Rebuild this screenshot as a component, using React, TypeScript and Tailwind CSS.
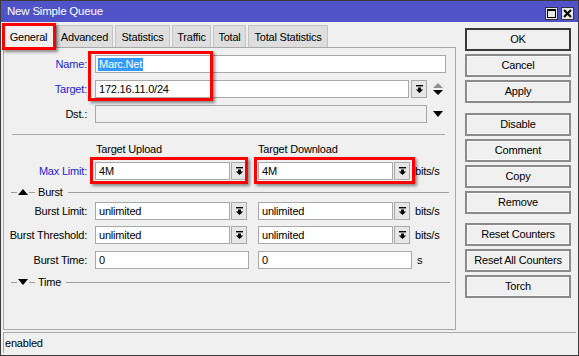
import React from "react";

const DropIcon = () => (
  <svg width="9" height="10" viewBox="0 0 9 10">
    <rect x="1" y="1" width="7" height="1.4" fill="#000" />
    <path d="M3 3.5h3v2h2.2L4.5 9 0.8 5.5H3z" fill="#000" />
  </svg>
);

const Input = ({ w, children, disabled }: { w: string; children?: React.ReactNode; disabled?: boolean }) => (
  <div
    className={`${w} h-[18px] border border-[#a8a8a8] ${disabled ? "bg-[#f0f0f0]" : "bg-white"} flex items-center pl-[3px] text-black whitespace-nowrap overflow-hidden`}
  >
    {children}
  </div>
);

const DropBtn = () => (
  <div className="w-[16px] h-[18px] border border-[#a8a8a8] bg-[#e6e6e6] flex items-center justify-center">
    <DropIcon />
  </div>
);

const Label = ({ children, blue }: { children: React.ReactNode; blue?: boolean }) => (
  <div className={`w-[84px] text-right pr-[1px] ${blue ? "text-[#1c1ccf]" : "text-black"}`}>{children}</div>
);

const Section = ({ title, up, lineW }: { title: string; up?: boolean; lineW: string }) => (
  <div className="h-[12px] flex items-center pl-[7px]">
    <div className="w-[6px] h-px bg-[#a0a0a0]" />
    <svg width="10" height="6" viewBox="0 0 10 6" className="ml-[1px]">
      {up ? <path d="M0 6L5 0l5 6z" fill="#000" /> : <path d="M0 0h10L5 6z" fill="#000" />}
    </svg>
    <div className="ml-[1px] w-[6px] h-px bg-[#a0a0a0]" />
    <div className="ml-[3px] text-black">{title}</div>
    <div className={`ml-[5px] ${lineW} h-px bg-[#a0a0a0]`} />
  </div>
);

const Btn = ({ children, def, mt }: { children: React.ReactNode; def?: boolean; mt: string }) => (
  <div
    className={`${mt} h-[23px] w-[106px] flex items-center justify-center bg-[#f0f0f0] ${
      def ? "border-2 border-[#3a3a3a]" : "border-2 border-[#8a8a8a] shadow-[inset_0_0_0_1px_#f8f8f8]"
    } text-black`}
  >
    {children}
  </div>
);

const Tab = ({ w, children, sel }: { w: string; children: React.ReactNode; sel?: boolean }) => (
  <div
    className={`${w} h-[22px] flex items-center justify-center pt-[1px] border border-b-0 ${
      sel ? "bg-[#f0f0f0] border-[#b5b5b5]" : "bg-[#dedede] border-[#c4c4c4]"
    } text-black`}
  >
    {children}
  </div>
);

export default function App() {
  return (
    <div className="relative w-[579px] h-[356px] bg-[#f0f0f0] border border-[#3b3b3b] flex flex-col overflow-hidden font-['Liberation_Sans',Arial,sans-serif] text-[11px] leading-none tracking-[-0.2px]">
      {/* title bar */}
      <div className="h-[21px] bg-[#5053c8] flex items-center pl-[6px] pr-[4px]">
        <div className="text-white text-[11.5px] mt-[1px]">New Simple Queue</div>
        <div className="ml-auto flex gap-[3px] mt-[3px]">
          <div className="w-[13px] h-[13px] bg-[#e8e8e8] border border-[#333] flex items-center justify-center">
            <div className="w-[9px] h-[9px] border border-black border-t-2" />
          </div>
          <div className="w-[13px] h-[13px] bg-[#e8e8e8] border border-[#333] flex items-center justify-center">
            <svg width="9" height="9" viewBox="0 0 9 9">
              <path d="M1 1l7 7M8 1L1 8" stroke="#000" strokeWidth="2" />
            </svg>
          </div>
        </div>
      </div>

      <div className="flex flex-1">
        {/* left column */}
        <div className="ml-[2px] w-[453px] flex flex-col">
          <div className="mt-[3px] flex gap-[2px] h-[22px] items-end">
            <Tab w="w-[51px]" sel>General</Tab>
            <Tab w="w-[57px]">Advanced</Tab>
            <Tab w="w-[55px]">Statistics</Tab>
            <Tab w="w-[39px]">Traffic</Tab>
            <Tab w="w-[33px]">Total</Tab>
            <Tab w="w-[80px]">Total Statistics</Tab>
          </div>
          <div className="h-[283px] border border-[#a8a8a8] flex flex-col pt-[7px]">
            {/* Name */}
            <div className="flex items-center">
              <Label blue>Name:</Label>
              <div className="ml-[7px]">
                <Input w="w-[351px]">
                  <span className="bg-[#3399ff] text-white px-[1px] -ml-[1px] leading-[13px]">Marc.Net</span>
                </Input>
              </div>
            </div>
            {/* Target */}
            <div className="mt-[7px] flex items-center">
              <Label blue>Target:</Label>
              <div className="ml-[7px] flex items-center">
                <Input w="w-[314px]">172.16.11.0/24</Input>
                <div className="ml-[2px]">
                  <DropBtn />
                </div>
                <svg width="10" height="13" viewBox="0 0 10 13" className="ml-[6px]">
                  <path d="M0 5L5 0l5 5z" fill="#909090" />
                  <path d="M0 7h10L5 12z" fill="#000" />
                </svg>
              </div>
            </div>
            {/* Dst */}
            <div className="mt-[7px] flex items-center">
              <Label>Dst.:</Label>
              <div className="ml-[7px] flex items-center">
                <Input w="w-[332px]" disabled />
                <svg width="10" height="6" viewBox="0 0 10 6" className="ml-[6px]">
                  <path d="M0 0h10L5 6z" fill="#000" />
                </svg>
              </div>
            </div>
            {/* separator */}
            <div className="mt-[11px] ml-[8px] w-[433px] h-px bg-[#a8a8a8]" />
            {/* headers */}
            <div className="mt-[7px] h-[14px] flex items-center text-black">
              <div className="ml-[92px] w-[162px]">Target Upload</div>
              <div>Target Download</div>
            </div>
            {/* Max limit */}
            <div className="mt-[6px] flex items-center">
              <Label blue>Max Limit:</Label>
              <div className="ml-[7px] flex items-center">
                <Input w="w-[135px]">4M</Input>
                <div className="ml-[1px]">
                  <DropBtn />
                </div>
                <div className="ml-[11px]">
                  <Input w="w-[135px]">4M</Input>
                </div>
                <div className="ml-[1px]">
                  <DropBtn />
                </div>
                <div className="ml-[5px] text-black">bits/s</div>
              </div>
            </div>
            {/* Burst section */}
            <div className="mt-[6px]">
              <Section title="Burst" up lineW="w-[381px]" />
            </div>
            {/* Burst limit */}
            <div className="mt-[4px] flex items-center">
              <Label>Burst Limit:</Label>
              <div className="ml-[7px] flex items-center">
                <Input w="w-[135px]">unlimited</Input>
                <div className="ml-[1px]">
                  <DropBtn />
                </div>
                <div className="ml-[11px]">
                  <Input w="w-[135px]">unlimited</Input>
                </div>
                <div className="ml-[1px]">
                  <DropBtn />
                </div>
                <div className="ml-[5px] text-black">bits/s</div>
              </div>
            </div>
            {/* Burst threshold */}
            <div className="mt-[6px] flex items-center">
              <Label>Burst Threshold:</Label>
              <div className="ml-[7px] flex items-center">
                <Input w="w-[135px]">unlimited</Input>
                <div className="ml-[1px]">
                  <DropBtn />
                </div>
                <div className="ml-[11px]">
                  <Input w="w-[135px]">unlimited</Input>
                </div>
                <div className="ml-[1px]">
                  <DropBtn />
                </div>
                <div className="ml-[5px] text-black">bits/s</div>
              </div>
            </div>
            {/* Burst time */}
            <div className="mt-[7px] flex items-center">
              <Label>Burst Time:</Label>
              <div className="ml-[7px] flex items-center">
                <Input w="w-[154px]">0</Input>
                <div className="ml-[9px]">
                  <Input w="w-[154px]">0</Input>
                </div>
                <div className="ml-[5px] text-black">s</div>
              </div>
            </div>
            {/* Time section */}
            <div className="mt-[7px]">
              <Section title="Time" lineW="w-[384px]" />
            </div>
          </div>
        </div>

        {/* right buttons */}
        <div className="ml-[9px] flex flex-col">
          <Btn def mt="mt-[6px]">OK</Btn>
          <Btn mt="mt-[3px]">Cancel</Btn>
          <Btn mt="mt-[3px]">Apply</Btn>
          <Btn mt="mt-[10px]">Disable</Btn>
          <Btn mt="mt-[3px]">Comment</Btn>
          <Btn mt="mt-[3px]">Copy</Btn>
          <Btn mt="mt-[3px]">Remove</Btn>
          <Btn mt="mt-[9px]">Reset Counters</Btn>
          <Btn mt="mt-[3px]">Reset All Counters</Btn>
          <Btn mt="mt-[3px]">Torch</Btn>
        </div>
      </div>

      {/* status bar */}
      <div className="mt-[2px] mx-[2px] mb-[2px] h-[21px] border-t border-l border-[#a8a8a8] flex items-center pl-[1px] text-black">
        enabled
      </div>

      {/* red highlight overlays */}
      <div className="absolute left-[1px] top-[22px] w-[54px] h-[27px] border-[3px] border-[#ff0000] shadow-[2px_2px_3px_rgba(0,0,0,0.45)]" />
      <div className="absolute left-[87px] top-[50px] w-[125px] h-[50px] border-[3px] border-[#ff0000] shadow-[2px_2px_3px_rgba(0,0,0,0.45)]" />
      <div className="absolute left-[89px] top-[156px] w-[158px] h-[27px] border-[3px] border-[#ff0000] shadow-[2px_2px_3px_rgba(0,0,0,0.45)]" />
      <div className="absolute left-[253px] top-[156px] w-[161px] h-[27px] border-[3px] border-[#ff0000] shadow-[2px_2px_3px_rgba(0,0,0,0.45)]" />
    </div>
  );
}
